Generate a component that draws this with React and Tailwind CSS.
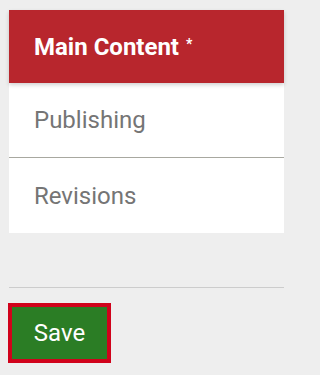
import React from "react";

const tabs = ["Publishing", "Revisions"];

const App = () => {
    return (
        <div
            className="min-h-screen bg-[#eeeeee] pt-[10px] px-[9px]"
            style={{ fontFamily: "Roboto, 'Liberation Sans', sans-serif" }}
        >
            <div className="w-[275px]">
                <div className="bg-white">
                    <div className="relative z-10 h-[73px] bg-[#b8262d] flex items-center px-[25px] shadow-[0_2px_4px_rgba(0,0,0,0.18)]">
                        <span className="text-white text-[24px] font-bold leading-none">Main Content</span>
                        <span className="text-white text-[14px] font-bold ml-[7px] self-start mt-[27px] leading-none">*</span>
                    </div>
                    {tabs.map((tab, i) => (
                        <div
                            key={tab}
                            className={
                                "h-[75px] flex items-center px-[25px] text-[24px] text-[#757575] " +
                                (i === 0 ? "border-b border-[#a8a8a0]" : "")
                            }
                        >
                            {tab}
                        </div>
                    ))}
                </div>

                <div className="mt-[54px] border-t border-[#cccccc]"></div>

                <div className="mt-[15px] -ml-px">
                    <button className="h-[60px] w-[103px] bg-[#2b7d25] border-4 border-[#d0021b] text-white text-[24px] flex items-center justify-center">
                        Save
                    </button>
                </div>
            </div>
        </div>
    );
};

export default App;
